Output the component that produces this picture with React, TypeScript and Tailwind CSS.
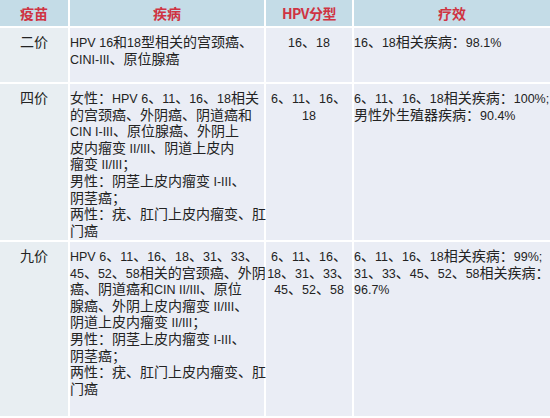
const rows = [
  {
    name: '二价',
    disease: ['HPV 16和18型相关的宫颈癌、', 'CINI-III、原位腺癌'],
    types: ['16、18'],
    effect: ['16、18相关疾病：98.1%'],
  },
  {
    name: '四价',
    disease: [
      '女性：HPV 6、11、16、18相关',
      '的宫颈癌、外阴癌、阴道癌和',
      'CIN I-III、原位腺癌、外阴上',
      '皮内瘤变 II/III、阴道上皮内',
      '瘤变 II/III；',
      '男性：阴茎上皮内瘤变 I-III、',
      '阴茎癌；',
      '两性：疣、肛门上皮内瘤变、肛',
      '门癌',
    ],
    types: ['6、11、16、', '18'],
    effect: ['6、11、16、18相关疾病：100%;', '男性外生殖器疾病：90.4%'],
  },
  {
    name: '九价',
    disease: [
      'HPV 6、11、16、18、31、33、',
      '45、52、58相关的宫颈癌、外阴',
      '癌、阴道癌和CIN II/III、原位',
      '腺癌、外阴上皮内瘤变 II/III、',
      '阴道上皮内瘤变 II/III；',
      '男性：阴茎上皮内瘤变 I-III、',
      '阴茎癌；',
      '两性：疣、肛门上皮内瘤变、肛',
      '门癌',
    ],
    types: ['6、11、16、', '18、31、33、', '45、52、58'],
    effect: ['6、11、16、18相关疾病：99%;', '31、33、45、52、58相关疾病：', '96.7%'],
  },
];

// latin runs get a narrower face, like the half-width glyphs in the slide
const Text = ({ s }: { s: string }) => (
  <>
    {s.split(/([A-Za-z0-9 .%;/\-]+)/).map((part, i) =>
      /^[A-Za-z0-9 .%;/\-]+$/.test(part) ? (
        <span key={i} className="font-['Liberation_Sans',sans-serif] text-[12.5px] leading-none">
          {part}
        </span>
      ) : (
        <span key={i} className="leading-none">{part}</span>
      ),
    )}
  </>
);

const Lines = ({ lines }: { lines: string[] }) => (
  <>
    {lines.map((l, i) => (
      <div key={i} className="h-[16.6px] whitespace-nowrap">
        <Text s={l} />
      </div>
    ))}
  </>
);

export default function App() {
  return (
    <div className="w-[550px] h-[418px] bg-white overflow-hidden text-[#232323] text-[14px] leading-[16.6px] font-['Noto_Sans_CJK_SC','Noto_Sans',sans-serif]">
      <div className="grid grid-cols-[68px_194px_86px_196px] gap-x-[2px] gap-y-[2px] grid-rows-[26px_54px_156px_174px]">
        <div className="bg-[#c4dce7] flex items-center justify-center font-bold text-[#cf3342]">疫苗</div>
        <div className="bg-[#c4dce7] flex items-center justify-center font-bold text-[#cf3342]">疾病</div>
        <div className="bg-[#c4dce7] flex items-center justify-center font-bold text-[#cf3342] tracking-[-0.5px]">HPV分型</div>
        <div className="bg-[#c4dce7] flex items-center justify-center font-bold text-[#cf3342]">疗效</div>
        {rows.map((r) => (
          <div key={r.name} className="contents">
            <div className="bg-[#e8eef2] pt-[5px] text-center">{r.name}</div>
            <div className="bg-[#eaedf5] pt-[5px]">
              <Lines lines={r.disease} />
            </div>
            <div className="bg-[#eaedf5] pt-[5px] text-center">
              <Lines lines={r.types} />
            </div>
            <div className="bg-[#eaedf5] pt-[5px] overflow-hidden">
              <Lines lines={r.effect} />
            </div>
          </div>
        ))}
      </div>
    </div>
  );
}
